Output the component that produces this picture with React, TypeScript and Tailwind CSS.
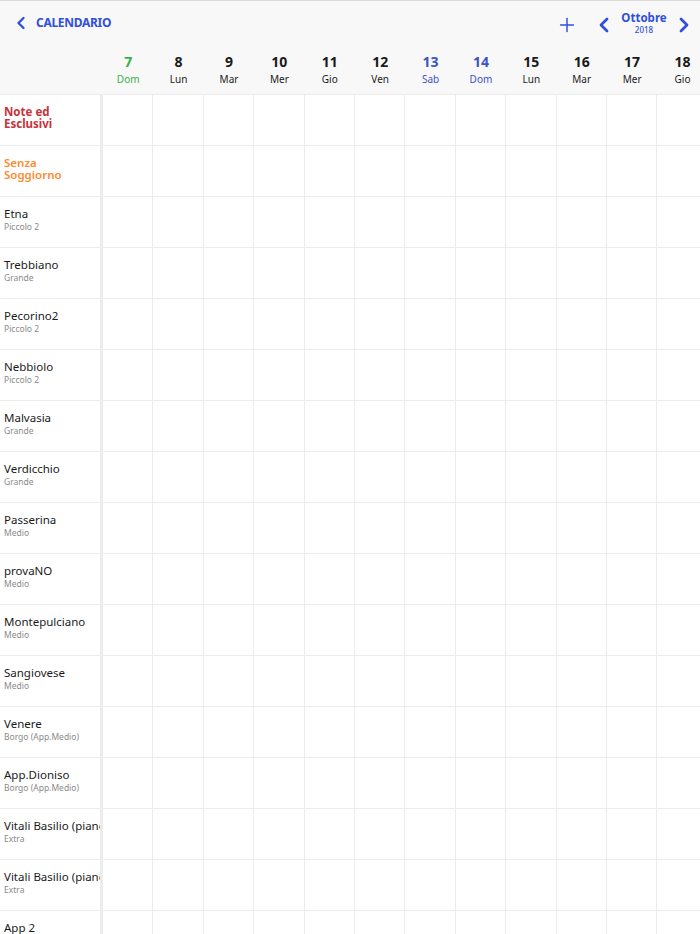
import { Plus, ChevronLeft, ChevronRight } from "lucide-react";

const days = [
  { n: "7", d: "Dom", tone: "green" },
  { n: "8", d: "Lun" },
  { n: "9", d: "Mar" },
  { n: "10", d: "Mer" },
  { n: "11", d: "Gio" },
  { n: "12", d: "Ven" },
  { n: "13", d: "Sab", tone: "blue" },
  { n: "14", d: "Dom", tone: "blue" },
  { n: "15", d: "Lun" },
  { n: "16", d: "Mar" },
  { n: "17", d: "Mer" },
  { n: "18", d: "Gio" },
];

type Room = { name: string; sub?: string; color?: string };

const rooms: Room[] = [
  { name: "Note ed Esclusivi", color: "text-[#c8323c] font-bold" },
  { name: "Senza Soggiorno", color: "text-[#ff8a2e] font-semibold" },
  { name: "Etna", sub: "Piccolo 2" },
  { name: "Trebbiano", sub: "Grande" },
  { name: "Pecorino2", sub: "Piccolo 2" },
  { name: "Nebbiolo", sub: "Piccolo 2" },
  { name: "Malvasia", sub: "Grande" },
  { name: "Verdicchio", sub: "Grande" },
  { name: "Passerina", sub: "Medio" },
  { name: "provaNO", sub: "Medio" },
  { name: "Montepulciano", sub: "Medio" },
  { name: "Sangiovese", sub: "Medio" },
  { name: "Venere", sub: "Borgo (App.Medio)" },
  { name: "App.Dioniso", sub: "Borgo (App.Medio)" },
  { name: "Vitali Basilio (piano terra)", sub: "Extra" },
  { name: "Vitali Basilio (piano primo)", sub: "Extra" },
  { name: "App 2", sub: "Extra" },
];

const toneClass = (tone?: string) =>
  tone === "green"
    ? "text-[#36b14a]"
    : tone === "blue"
      ? "text-[#3d52c4]"
      : "text-[#1a1a1a]";

export default function App() {
  return (
    <div
      className="h-[934px] w-[700px] overflow-hidden bg-white"
      style={{ fontFamily: "'Noto Sans', Lato, sans-serif" }}
    >
      <div className="border-t border-[#dcdcdc] bg-[#f8f8f8]">
        <div className="flex h-[44px] items-center justify-between pl-[11px] pr-[4px]">
          <div className="flex items-center gap-[5px] text-[#2f4fdc]">
            <ChevronLeft size={20} strokeWidth={2.8} />
            <span className="text-[12px] font-bold tracking-tight">
              CALENDARIO
            </span>
          </div>
          <div className="flex items-center text-[#2f4fdc]">
            <Plus size={22} strokeWidth={1.6} className="mr-[14px] mt-[4px]" />
            <ChevronLeft size={24} strokeWidth={2.8} className="mt-[4px]" />
            <div className="flex w-[56px] flex-col items-center leading-none">
              <span className="text-[11.5px] font-bold">Ottobre</span>
              <span className="mt-[2px] text-[8px] font-medium">2018</span>
            </div>
            <ChevronRight size={24} strokeWidth={2.8} className="mt-[4px]" />
          </div>
        </div>
        <div className="flex h-[49px]">
          <div className="w-[103px] shrink-0" />
          {days.map((d) => (
            <div
              key={d.n}
              className={`flex w-[50.4px] shrink-0 flex-col items-center pt-[10px] leading-none ${toneClass(d.tone)}`}
            >
              <span className="text-[14px] font-bold">{d.n}</span>
              <span className="mt-[5px] text-[10px]">{d.d}</span>
            </div>
          ))}
        </div>
      </div>
      <div className="border-t border-[#ececec]">
        {rooms.map((r) => (
          <div key={r.name} className="flex h-[51px] border-b border-[#ececec]">
            <div className="w-[103px] shrink-0 overflow-hidden whitespace-nowrap border-r-[3px] border-[#ececec] pl-[4px] pt-[11px] leading-none">
              {r.sub ? (
                <>
                  <div className="text-[11.5px] text-[#1a1a1a]">{r.name}</div>
                  <div className="mt-[3px] text-[8.5px] text-[#8a8a8a]">
                    {r.sub}
                  </div>
                </>
              ) : (
                <div
                  className={`whitespace-normal pr-[30px] text-[11.5px] leading-[12px] ${r.color}`}
                >
                  {r.name}
                </div>
              )}
            </div>
            {days.map((d) => (
              <div
                key={d.n}
                className="w-[50.4px] shrink-0 border-r border-[#ececec]"
              />
            ))}
          </div>
        ))}
      </div>
    </div>
  );
}
